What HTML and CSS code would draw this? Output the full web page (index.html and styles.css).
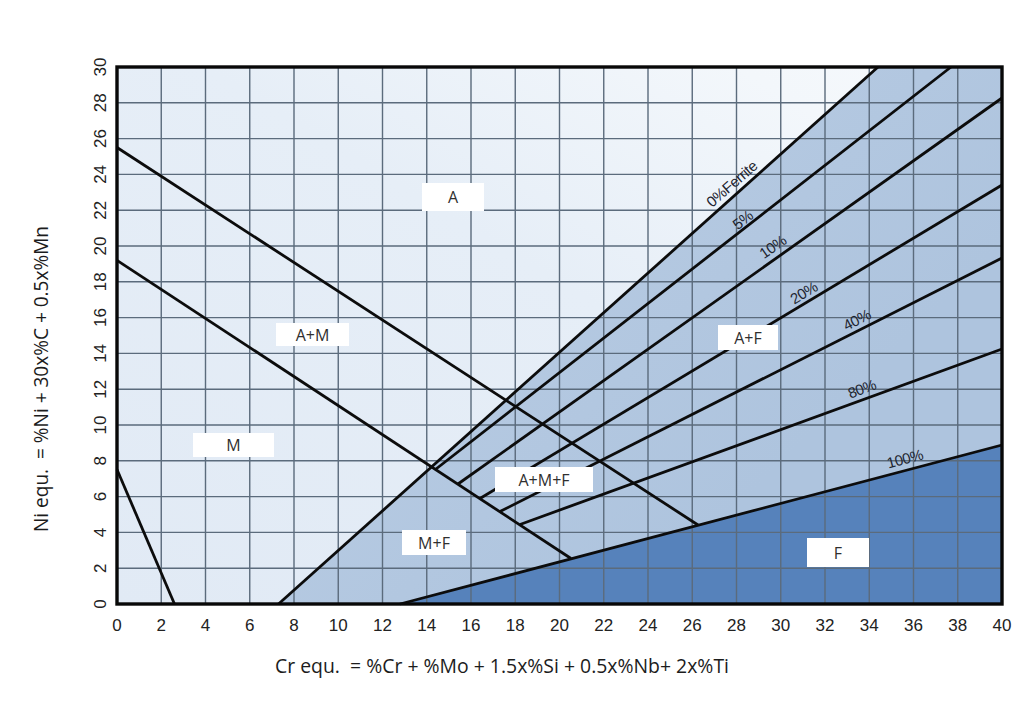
FILE: index.html
```html
<!DOCTYPE html>
<html lang="en">
<head>
<meta charset="utf-8">
<title>Schaeffler diagram</title>
<link rel="stylesheet" href="styles.css">
</head>
<body>
<div class="figure">
<svg class="chart" width="1024" height="724" viewBox="0 0 1024 724" xmlns="http://www.w3.org/2000/svg">
  <defs>
    <linearGradient id="gLight" x1="0" y1="1" x2="1" y2="0">
      <stop offset="0" stop-color="#e1eaf5"/>
      <stop offset="0.55" stop-color="#e6eef7"/>
      <stop offset="0.85" stop-color="#f3f7fb"/>
      <stop offset="1" stop-color="#f6f9fc"/>
    </linearGradient>
    <linearGradient id="gMid" x1="0" y1="0" x2="0.8" y2="0.6">
      <stop offset="0" stop-color="#c6d6e9"/>
      <stop offset="0.45" stop-color="#b6cae2"/>
      <stop offset="1" stop-color="#aec4de"/>
    </linearGradient>
  </defs>

  <!-- regions -->
  <rect class="region-light" x="117" y="67" width="885" height="537"/>
  <polygon class="region-mid" points="278.5,604 878,67 1002,67 1002,445 400,604"/>
  <polygon class="region-dark" points="400,604 1002,445 1002,604"/>

  <!-- grid -->
  <path class="grid" d="M161.25 67V604 M205.5 67V604 M249.75 67V604 M294 67V604 M338.25 67V604 M382.5 67V604 M426.75 67V604 M471 67V604 M515.25 67V604 M559.5 67V604 M603.75 67V604 M648 67V604 M692.25 67V604 M736.5 67V604 M780.75 67V604 M825 67V604 M869.25 67V604 M913.5 67V604 M957.75 67V604 M117 568.2H1002 M117 532.4H1002 M117 496.6H1002 M117 460.8H1002 M117 425H1002 M117 389.2H1002 M117 353.4H1002 M117 317.6H1002 M117 281.8H1002 M117 246H1002 M117 210.2H1002 M117 174.4H1002 M117 138.6H1002 M117 102.8H1002"/>

  <!-- boundary lines -->
  <g class="bound">
    <line x1="117" y1="469.5" x2="174.5" y2="604"/>
    <line x1="117" y1="260.3" x2="571" y2="558.5"/>
    <line x1="117" y1="147.5" x2="698" y2="525"/>
    <line x1="278.5" y1="604" x2="878" y2="67"/>
    <line x1="436" y1="469" x2="951" y2="67"/>
    <line x1="458" y1="484" x2="1002" y2="98"/>
    <line x1="480" y1="498.5" x2="1002" y2="185"/>
    <line x1="500" y1="511.5" x2="1002" y2="258"/>
    <line x1="520" y1="524.5" x2="1002" y2="349"/>
    <line x1="400" y1="604" x2="1002" y2="445"/>
  </g>

  <!-- frame -->
  <rect class="frame" x="117" y="67" width="885" height="537"/>

  <!-- ferrite percentage labels -->
  <g class="pct">
    <text x="732" y="189" transform="rotate(-41 732 184)">0%Ferrite</text>
    <text x="743" y="225" transform="rotate(-38 743 220)">5%</text>
    <text x="773" y="252" transform="rotate(-35 773 247)">10%</text>
    <text x="804" y="298" transform="rotate(-31 804 293)">20%</text>
    <text x="857" y="325" transform="rotate(-27 857 320)">40%</text>
    <text x="862" y="394" transform="rotate(-20 862 389)">80%</text>
    <text x="905" y="464" transform="rotate(-15 905 459)">100%</text>
  </g>

  <!-- phase labels -->
  <g class="phase">
    <rect class="tag" x="422" y="183" width="62" height="28"/>
    <text x="453" y="203">A</text>
    <rect class="tag" x="276" y="323" width="73" height="23"/>
    <text x="312.5" y="340.5">A+M</text>
    <rect class="tag" x="193" y="433" width="81" height="24"/>
    <text x="233.5" y="451">M</text>
    <rect class="tag" x="495" y="467" width="98" height="25"/>
    <text x="544" y="485.5">A+M+F</text>
    <rect class="tag" x="402" y="530" width="64" height="25"/>
    <text x="434" y="548.5">M+F</text>
    <rect class="tag" x="718" y="325" width="60" height="25"/>
    <text x="748" y="343.5">A+F</text>
    <rect class="tag" x="807" y="538" width="62" height="29"/>
    <text x="838" y="558.5">F</text>
  </g>

  <!-- x tick labels -->
  <g class="tick tick-x">
    <text x="117" y="631">0</text>
    <text x="161.25" y="631">2</text>
    <text x="205.5" y="631">4</text>
    <text x="249.75" y="631">6</text>
    <text x="294" y="631">8</text>
    <text x="338.25" y="631">10</text>
    <text x="382.5" y="631">12</text>
    <text x="426.75" y="631">14</text>
    <text x="471" y="631">16</text>
    <text x="515.25" y="631">18</text>
    <text x="559.5" y="631">20</text>
    <text x="603.75" y="631">22</text>
    <text x="648" y="631">24</text>
    <text x="692.25" y="631">26</text>
    <text x="736.5" y="631">28</text>
    <text x="780.75" y="631">30</text>
    <text x="825" y="631">32</text>
    <text x="869.25" y="631">34</text>
    <text x="913.5" y="631">36</text>
    <text x="957.75" y="631">38</text>
    <text x="1002" y="631">40</text>
  </g>

  <!-- y tick labels -->
  <g class="tick tick-y">
    <text x="106" y="604" transform="rotate(-90 106 604)">0</text>
    <text x="106" y="568.2" transform="rotate(-90 106 568.2)">2</text>
    <text x="106" y="532.4" transform="rotate(-90 106 532.4)">4</text>
    <text x="106" y="496.6" transform="rotate(-90 106 496.6)">6</text>
    <text x="106" y="460.8" transform="rotate(-90 106 460.8)">8</text>
    <text x="106" y="425" transform="rotate(-90 106 425)">10</text>
    <text x="106" y="389.2" transform="rotate(-90 106 389.2)">12</text>
    <text x="106" y="353.4" transform="rotate(-90 106 353.4)">14</text>
    <text x="106" y="317.6" transform="rotate(-90 106 317.6)">16</text>
    <text x="106" y="281.8" transform="rotate(-90 106 281.8)">18</text>
    <text x="106" y="246" transform="rotate(-90 106 246)">20</text>
    <text x="106" y="210.2" transform="rotate(-90 106 210.2)">22</text>
    <text x="106" y="174.4" transform="rotate(-90 106 174.4)">24</text>
    <text x="106" y="138.6" transform="rotate(-90 106 138.6)">26</text>
    <text x="106" y="102.8" transform="rotate(-90 106 102.8)">28</text>
    <text x="106" y="67" transform="rotate(-90 106 67)">30</text>
  </g>

  <!-- axis titles -->
  <text class="axis-title" x="502" y="673" textLength="454" lengthAdjust="spacingAndGlyphs">Cr equ.  = %Cr + %Mo + 1.5x%Si + 0.5x%Nb+ 2x%Ti</text>
  <text class="axis-title" x="47.5" y="379" transform="rotate(-90 47.5 379)" textLength="306" lengthAdjust="spacingAndGlyphs">Ni equ.  = %Ni + 30x%C + 0.5x%Mn</text>
</svg>
</div>
</body>
</html>
```

FILE: styles.css
```css
html, body {
  margin: 0;
  padding: 0;
  background: #ffffff;
}

.figure {
  width: 1024px;
  height: 724px;
  overflow: hidden;
}

.chart {
  display: block;
  font-family: "Liberation Sans", "DejaVu Sans", Arial, sans-serif;
}

.region-light {
  fill: url(#gLight);
}

.region-mid {
  fill: url(#gMid);
}

.region-dark {
  fill: #5682bb;
}

.grid {
  fill: none;
  stroke: #5b6b7c;
  stroke-width: 1.4;
}

.bound line {
  stroke: #0c0c0c;
  stroke-width: 2.8;
  stroke-linecap: butt;
}

.frame {
  fill: none;
  stroke: #080808;
  stroke-width: 3.4;
}

.pct text {
  font-family: "Liberation Sans", Arial, sans-serif;
  font-size: 15px;
  fill: #1e2530;
  text-anchor: middle;
  letter-spacing: -0.4px;
}

.tag {
  fill: #ffffff;
}

.phase text {
  font-family: "Open Sans", "Liberation Sans", sans-serif;
  font-size: 16px;
  fill: #2f2f2f;
  text-anchor: middle;
}

.tick text {
  font-size: 17px;
  fill: #222222;
  text-anchor: middle;
}

.axis-title {
  font-family: "Open Sans", "Liberation Sans", sans-serif;
  font-size: 20px;
  fill: #1c1c1c;
  text-anchor: middle;
  white-space: pre;
}
```
